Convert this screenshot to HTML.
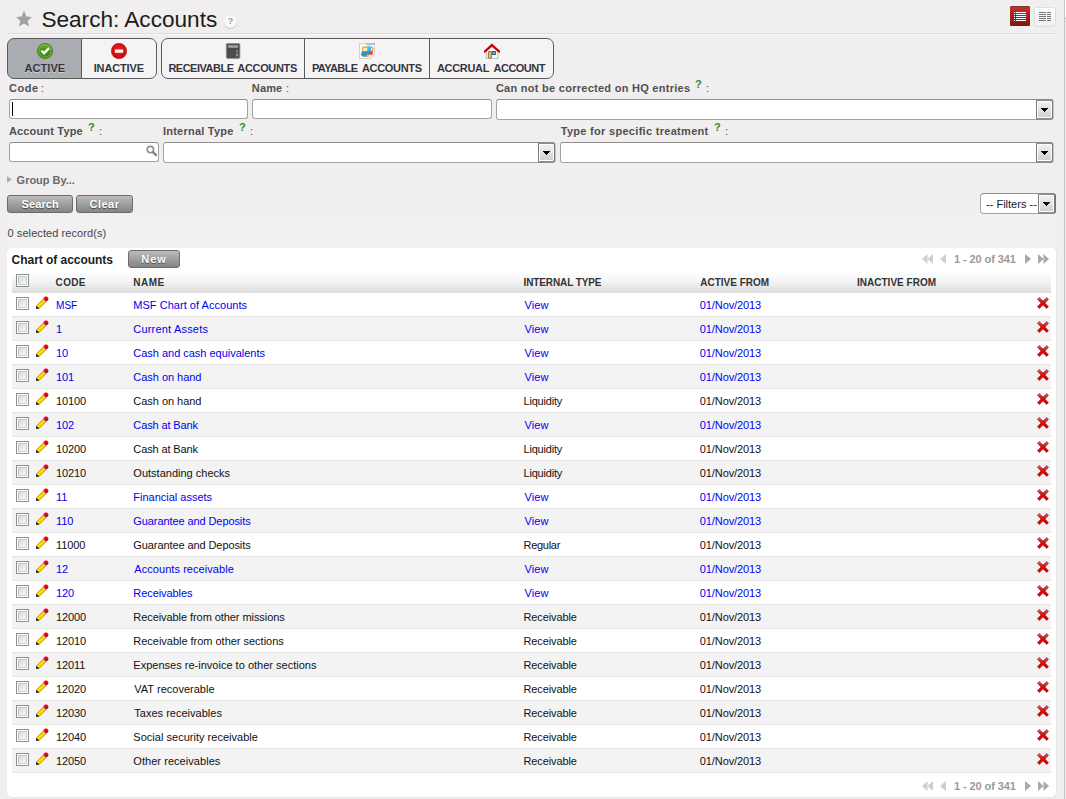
<!DOCTYPE html>
<html><head><meta charset="utf-8"><title>Search: Accounts</title>
<style>
html,body{margin:0;padding:0}
body{width:1066px;height:799px;overflow:hidden;position:relative;background:#f0eeee;font-family:"Liberation Sans",sans-serif;font-size:11px;color:#1a1a1a}
div,span,i,svg{position:absolute;box-sizing:border-box}
i{display:block}
span{white-space:nowrap;line-height:14px}
/* right edge */
#edge{left:1064px;top:0;width:1px;height:799px;background:#c6c6c6}
#edge2{left:1065px;top:0;width:1px;height:799px;background:#eeecec}
#edge3{left:1065px;top:0;width:1px;height:17px;background:#fff}
#edge4{left:1065px;top:18px;width:1px;height:1px;background:#c8c8c8}
/* title */
#star{left:16px;top:11px;width:16px;height:16px}
#title{left:42px;top:7px;font-size:22.6px;line-height:26px;color:#1b1b1b}
#help{left:224px;top:15px;width:13px;height:13px;border-radius:7px;background:#f9f9f9;box-shadow:0 1px 1px rgba(0,0,0,.18)}
#help span{left:0;top:0;width:13px;text-align:center;font-size:9px;line-height:13px;font-weight:bold;color:#9a9a9a}
#hr1{left:7px;top:33px;width:1049px;height:1px;background:#dedcdc}
#hr2{left:7px;top:34px;width:1049px;height:1px;background:#f8f7f7}
#vlist{left:1010px;top:6px;width:20px;height:20px;border-radius:1.5px;background:linear-gradient(#c6342b,#a8241c 45%,#7b1710);box-shadow:inset 0 1px 0 rgba(60,60,60,.55)}
#vgrid{left:1034px;top:7px;width:22px;height:20px;border-radius:3px;background:linear-gradient(#ffffff,#efefef);border:1px solid #e0dede}
#vlist svg,#vgrid svg{left:0;top:0}
/* toolbar buttons */
.grp{top:38px;height:41px;border:1px solid #5a5a5a;border-radius:7px;background:#f5f3f3;overflow:hidden}
.grp .btn{top:0;height:39px}
.grp .sep{top:0;width:1px;height:39px;background:#5a5a5a}
.grp .on{background:#a9acb1}
.btn svg{top:4px;width:16px;height:16px}
.btn span{top:22px;left:0;width:100%;text-align:center;font-weight:bold;font-size:11px;line-height:14px;color:#35353d;text-shadow:0 1px 0 rgba(255,255,255,.45)}
.btn span.w{width:auto;text-align:left}
/* labels */
.lb{font-weight:bold;color:#505050;font-size:11px}
.co{color:#4d4d4d;font-size:11px}
.q{color:#2e8b2e;font-size:11px;font-weight:bold}
.inp{height:20px;background:#fff;border:1px solid #a3a3a3;border-top-color:#8e8e8e;border-radius:3px}
.sel{height:21px;background:#fff;border:1px solid #a3a3a3;border-top-color:#8e8e8e;border-radius:3px}
.sel i{right:-1px;top:-1px;width:17px;height:21px;border:1px solid #787878;border-top:2px solid #8c8c8c;border-bottom:2px solid #8c8c8c;border-radius:0 3px 3px 0;background:linear-gradient(#f3f3f3,#e4e4e4 45%,#cecece);box-shadow:inset 0 0 0 1px #fff,1px 0 0 rgba(120,120,120,.35)}
.sel i:after{content:"";position:absolute;left:4px;top:7px;width:7px;height:4px;background:linear-gradient(#000,#000) 0 0/7px 1px no-repeat,linear-gradient(#000,#000) 1px 1px/5px 1px no-repeat,linear-gradient(#000,#000) 2px 2px/3px 1px no-repeat,linear-gradient(#000,#000) 3px 3px/1px 1px no-repeat}
/* grey buttons */
.gb{height:18px;border:1px solid #6b6b6b;border-radius:3px;background:linear-gradient(#bdbdbd,#a2a2a2 45%,#858585)}
.gb span{left:0;top:1px;width:100%;text-align:center;color:#fff;font-weight:bold;font-size:11px;line-height:14px;text-shadow:0 1px 1px rgba(0,0,0,.55)}
/* panel */
#panel{left:7px;top:248px;width:1049px;height:549px;background:#fff;border-radius:5px;box-shadow:1px 1px 0 #e6e4e4}
#thead{left:12px;top:271px;width:1039px;height:22px;background:linear-gradient(#ffffff,#f6f6f6 40%,#dddddd)}
#thead span{top:6px;font-weight:bold;font-size:10px;line-height:12px;color:#333}
.cb{width:13px;height:13px;border:1px solid #8e8f8f;background:#fff}
.cb:after{content:"";position:absolute;left:1px;top:1px;width:9px;height:9px;background:linear-gradient(135deg,#d3d7db,#eceeef 60%,#f6f6f6);box-shadow:inset 0 0 0 1px rgba(170,175,180,.5)}
.r{left:12px;width:1039px;height:24px;border-bottom:1px solid #e4e4e4;background:#fff}
.r.alt{background:#f3f3f3}
.r .cb{left:4px;top:4px}
.r .pen{left:24px;top:4px;width:12px;height:12px;overflow:visible}
.r .del{left:1025px;top:4px;width:12px;height:12px}
.r span{top:5px;font-size:11px;line-height:14px;color:#111}
.r.b span{color:#0000f0}
.c1{left:44px}.c2{left:122px}.c3{left:512px}.c4{left:688px}
.pg{font-weight:bold;color:#9a9a9a;font-size:11px}
</style></head>
<body>
<svg width="0" height="0" style="left:0;top:0">
<defs>
<linearGradient id="gx" x1="0" y1="0" x2="0" y2="1"><stop offset="0" stop-color="#e26a6a"/><stop offset=".45" stop-color="#d40d0d"/><stop offset="1" stop-color="#e80000"/></linearGradient>
<g id="del"><path d="M2.2 0.6 L6 4.1 L9.8 0.6 L11.5 2.3 L7.9 6 L11.5 9.7 L9.8 11.4 L6 7.9 L2.2 11.4 L0.5 9.7 L4.1 6 L0.5 2.3 Z" fill="url(#gx)" stroke="#a31010" stroke-width=".7" stroke-linejoin="round"/></g>
<g id="pen">
<path d="M0 12.1 L0.4 8.4 L3.6 11.6 Z" fill="#141414"/>
<path d="M0.4 8.4 L7.3 1.6 L10.4 4.7 L3.6 11.6 Z" fill="#ffdb00"/>
<path d="M0.4 8.4 L7.3 1.6 L8.0 2.3 L1.1 9.1 Z" fill="#f0a000"/>
<path d="M2.9 10.9 L9.7 4.0 L10.4 4.7 L3.6 11.6 Z" fill="#e6a200"/>
<path d="M6.8 2.1 L7.8 1.1 L10.9 4.2 L9.9 5.2 Z" fill="#4aa8ee"/>
<path d="M8.5 -0.3 L10.8 -0.4 L12.3 1.1 L12.3 3.1 L11.0 4.2 L9.2 3.7 L7.7 1.4 Z" fill="#e00010"/>
</g>
<g id="pfirst"><path d="M5.5 0 L5.5 9 L0 4.5 Z M11 0 L11 9 L5.5 4.5 Z"/></g>
<g id="pprev"><path d="M6 0 L6 9 L0 4.5 Z"/></g>
</defs>
</svg>
<i id="edge"></i><i id="edge2"></i><i id="edge3"></i><i id="edge4"></i>

<svg id="star" viewBox="0 0 16 16" style="overflow:visible"><path d="M8 -0.5 L10.3 5.4 L16 5.9 L11.7 9.8 L13 15.6 L8 12.5 L3 15.6 L4.3 9.8 L0 5.9 L5.7 5.4 Z" fill="#a3a1a1"/></svg>
<span id="title" style="margin-left:-0.6px">Search: Accounts</span>
<div id="help"><span>?</span></div>
<i id="hr1"></i><i id="hr2"></i>
<div id="vlist"><svg width="20" height="20" viewBox="0 0 20 20"><path d="M4 6h1v1H4zM4 8h1v1H4zM4 10h1v1H4zM4 12h1v1H4zM4 14h1v1H4zM6 6h10v1H6zM6 8h10v1H6zM6 10h10v1H6zM6 12h10v1H6zM6 14h10v1H6z" fill="#fff"/></svg></div>
<div id="vgrid"><svg width="20" height="18" viewBox="0 0 20 18" style="left:0;top:0"><path d="M4 4h7v1H4zM4 6h7v1H4zM4 8h7v1H4zM4 10h7v1H4zM4 12h7v1H4zM12 4h4v1h-4zM12 6h4v1h-4zM12 8h4v1h-4zM12 10h4v1h-4zM12 12h4v1h-4z" fill="#787474"/></svg></div>

<!-- toolbar group 1 -->
<div class="grp" style="left:7px;width:150px;background:linear-gradient(90deg,#a9acb1 73px,#f5f3f3 73px)">
  <div class="btn" style="left:0;width:73px">
    <svg viewBox="0 0 16 16" style="left:29px">
      <defs><linearGradient id="gg" x1="0" y1="0" x2="0" y2="1"><stop offset="0" stop-color="#74ae38"/><stop offset=".5" stop-color="#4a9018"/><stop offset="1" stop-color="#3f8612"/></linearGradient></defs>
      <circle cx="8" cy="8" r="7.5" fill="url(#gg)" stroke="#3c7a14" stroke-width=".9"/>
      <circle cx="8" cy="8" r="6.3" fill="none" stroke="#9cc96c" stroke-width=".8" opacity=".75"/>
      <path d="M3.6 8.3 L5.3 6.9 L7 8.6 L11.3 4.3 L12.9 5.9 L7 11.9 Z" fill="#fff"/>
    </svg>
    <span style="letter-spacing:0.06px;margin-left:0.4px">ACTIVE</span>
  </div>
  <i class="sep" style="left:73px"></i>
  <div class="btn" style="left:74px;width:74px">
    <svg viewBox="0 0 16 16" style="left:29px">
      <defs><radialGradient id="gr" cx=".5" cy=".4" r=".6"><stop offset="0" stop-color="#ec2020"/><stop offset=".75" stop-color="#d40c10"/><stop offset="1" stop-color="#b80408"/></radialGradient></defs>
      <circle cx="8" cy="8" r="7.7" fill="url(#gr)" stroke="#b00408" stroke-width=".5"/>
      <rect x="3.8" y="6.5" width="8.4" height="3.2" rx=".5" fill="#fff"/>
    </svg>
    <span style="letter-spacing:-0.14px;margin-left:-0.2px">INACTIVE</span>
  </div>
</div>
<!-- toolbar group 2 -->
<div class="grp" style="left:161px;width:393px">
  <div class="btn" style="left:0;width:142px">
    <svg viewBox="0 0 16 16" style="left:63px">
      <rect x="1.3" y="0.5" width="13.6" height="14.9" rx="1.3" fill="#505354" stroke="#85888a" stroke-width=".7"/>
      <rect x="3.1" y="2.2" width="10" height="2.5" rx=".6" fill="#a2a68c"/>
      <rect x="2.6" y="5.6" width="11" height="1" fill="#3c4042"/>
      <path d="M3 7.4h2v1.5H3zM6 7.4h2v1.5H6zM3 10h2v1.5H3zM6 10h2v1.5H6zM3 12.6h2v1.5H3zM6 12.6h2v1.5H6zM8.8 7.4h1.2v6.7H8.8z" fill="#424647"/>
      <path d="M11 7.2h2v1.6h-2zM11 10.4h2v2.7h-2z" fill="#8b8e8e"/>
    </svg>
    <span class="w" style="left:6.4px;letter-spacing:-0.5px">RECEIVABLE</span><span class="w" style="left:75.3px;letter-spacing:-0.33px">ACCOUNTS</span>
  </div>
  <i class="sep" style="left:142px"></i>
  <div class="btn" style="left:143px;width:124px">
    <svg viewBox="0 0 16 16" style="left:54px">
      <defs><linearGradient id="gb" x1="0" y1="0" x2="0" y2="1"><stop offset="0" stop-color="#6cd0fc"/><stop offset="1" stop-color="#1e8fe6"/></linearGradient></defs>
      <path d="M0.4 0.4H15.6V11.6L11.2 15.6H0.4Z" fill="#fafafa" stroke="#c2c2c2" stroke-width=".8"/>
      <rect x="7" y="0.4" width="8.6" height="1.3" fill="#a4aaa4"/>
      <path d="M15.6 11.6L11.2 15.6L11.4 12.2Z" fill="#e6f0f2" stroke="#c8c8c8" stroke-width=".5"/>
      <rect x="3.7" y="4.1" width="10" height="5" rx="1.2" fill="#fdf3c4" stroke="#e79c30" stroke-width="1.2"/>
      <rect x="8.2" y="2.4" width="3.9" height="8.6" rx="1.9" fill="url(#gb)"/>
      <ellipse cx="6.1" cy="10.9" rx="4.1" ry="2.9" fill="#1a98ee"/>
      <circle cx="11.9" cy="9.9" r="2" fill="#f0402e"/>
      <circle cx="5.3" cy="11.7" r="1" fill="#35b035"/>
      <circle cx="6.9" cy="11.6" r="1" fill="#e84c1e"/>
      <ellipse cx="8.7" cy="12.8" rx="1.5" ry="1.2" fill="#efb200"/>
    </svg>
    <span class="w" style="left:6.9px;letter-spacing:-0.58px">PAYABLE</span><span class="w" style="left:57px;letter-spacing:-0.33px">ACCOUNTS</span>
  </div>
  <i class="sep" style="left:267px"></i>
  <div class="btn" style="left:268px;width:123px">
    <svg viewBox="0 0 16 16" style="left:54px">
      <path d="M2.4 8.2L8 3.6L13.8 8.2V15.6H2.4Z" fill="#fdfdfb" stroke="#a3aaa3" stroke-width=".8"/>
      <path d="M0.8 8.5L7.9 2.1L15.2 8.5" fill="none" stroke="#cc0000" stroke-width="2.3" stroke-linecap="square"/>
      <rect x="4.4" y="8.4" width="3.2" height="6.6" rx=".6" fill="#e2bb76" stroke="#8c6628" stroke-width=".9"/>
      <rect x="8.1" y="8.1" width="3.8" height="3.8" rx=".4" fill="#2c4e8e"/>
      <rect x="9.1" y="9.1" width="1.9" height="1.9" fill="#8fb4e4"/>
    </svg>
    <span class="w" style="left:7px;letter-spacing:-0.32px">ACCRUAL</span><span class="w" style="left:63.6px;letter-spacing:-0.53px">ACCOUNT</span>
  </div>
</div>

<!-- form row 1 -->
<span class="lb" style="letter-spacing:0.53px;margin-left:-0.1px;left:9px;top:81px">Code</span><span class="co" style="left:41px;top:81px">:</span>
<span class="lb" style="letter-spacing:0.13px;margin-left:-0.2px;left:252px;top:81px">Name</span><span class="co" style="left:286px;top:81px">:</span>
<span class="lb" style="letter-spacing:0.27px;margin-left:-0.1px;left:496px;top:81px">Can not be corrected on HQ entries</span><span class="q" style="left:695px;top:77px">?</span><span class="co" style="left:706px;top:81px">:</span>
<div class="inp" style="left:9px;top:99px;width:239px"><i style="left:2px;top:2px;width:1px;height:14px;background:#000"></i></div>
<div class="inp" style="left:252px;top:99px;width:240px"></div>
<div class="sel" style="left:496px;top:99px;width:557px"><i></i></div>
<!-- form row 2 -->
<span class="lb" style="letter-spacing:0.17px;margin-left:-0.1px;left:9px;top:124px">Account Type</span><span class="q" style="left:88px;top:120px">?</span><span class="co" style="left:99px;top:124px">:</span>
<span class="lb" style="letter-spacing:0.24px;margin-left:-0.1px;left:163px;top:124px">Internal Type</span><span class="q" style="left:239px;top:120px">?</span><span class="co" style="left:250px;top:124px">:</span>
<span class="lb" style="letter-spacing:0.30px;margin-left:0.7px;left:560px;top:124px">Type for specific treatment</span><span class="q" style="left:714px;top:120px">?</span><span class="co" style="left:725px;top:124px">:</span>
<div class="inp" style="left:9px;top:142px;width:150px">
  <svg viewBox="0 0 12 12" style="left:136px;top:2px;width:12px;height:12px"><circle cx="4.4" cy="4.6" r="3.2" fill="#fff" stroke="#909090" stroke-width="1.6"/><path d="M7 7.2 L10 10.2" stroke="#858585" stroke-width="2.4" stroke-linecap="round"/></svg>
</div>
<div class="sel" style="left:163px;top:142px;width:392px"><i></i></div>
<div class="sel" style="left:560px;top:142px;width:493px"><i></i></div>

<!-- group by -->
<svg viewBox="0 0 5 7" style="left:7px;top:176px;width:5px;height:7px"><path d="M0 0 L5 3.5 L0 7 Z" fill="#b0aeae"/></svg>
<span class="lb" style="letter-spacing:-0.02px;margin-left:-0.4px;left:17px;top:173px;color:#6a6a6a">Group By...</span>

<div class="gb" style="left:7px;top:195px;width:66px"><span style="letter-spacing:0.10px;margin-left:0.2px">Search</span></div>
<div class="gb" style="left:76px;top:195px;width:57px"><span style="letter-spacing:0.50px">Clear</span></div>
<div class="sel" style="left:980px;top:193px;width:76px;border-radius:4px"><span style="letter-spacing:0.01px;left:5px;top:3px;font-size:11px;color:#15152a">-- Filters --</span><i style="border-right-width:2px;width:18px;box-shadow:inset 0 0 0 1px #fff"></i></div>
<i style="left:7px;top:214px;width:1049px;height:34px;background:#f2f0f0"></i>

<span style="letter-spacing:0.08px;margin-left:0.5px;left:7px;top:226px;color:#444">0 selected record(s)</span>

<div id="panel"></div>
<span style="letter-spacing:-0.04px;margin-left:-0.4px;left:12px;top:253px;font-size:12px;font-weight:bold;color:#1c1c1c;line-height:15px">Chart of accounts</span>
<div class="gb" style="left:128px;top:250px;width:52px"><span style="letter-spacing:0.95px;margin-left:0.1px">New</span></div>

<!-- pager top -->
<svg viewBox="0 0 11 9" preserveAspectRatio="none" style="left:922px;top:254px;width:11px;height:10px" fill="#cfcfcf"><use href="#pfirst"/></svg>
<svg viewBox="0 0 6 9" preserveAspectRatio="none" style="left:940px;top:254px;width:6px;height:10px" fill="#cfcfcf"><use href="#pprev"/></svg>
<span class="pg" style="letter-spacing:-0.08px;margin-left:-0.1px;left:954px;top:252px">1 - 20 of 341</span>
<svg viewBox="0 0 6 9" preserveAspectRatio="none" style="left:1025px;top:254px;width:6px;height:10px;transform:scaleX(-1)" fill="#a9a9a9"><use href="#pprev"/></svg>
<svg viewBox="0 0 11 9" preserveAspectRatio="none" style="left:1038px;top:254px;width:11px;height:10px;transform:scaleX(-1)" fill="#a9a9a9"><use href="#pfirst"/></svg>

<div id="thead">
  <i class="cb" style="left:4px;top:3px"></i>
  <span style="letter-spacing:0.33px;margin-left:-0.4px;left:44px">CODE</span>
  <span style="letter-spacing:0.47px;margin-left:-0.7px;left:122px">NAME</span>
  <span style="letter-spacing:-0.11px;margin-left:-0.5px;left:512px">INTERNAL TYPE</span>
  <span style="letter-spacing:-0.01px;margin-left:0.3px;left:688px">ACTIVE FROM</span>
  <span style="letter-spacing:0.03px;margin-left:-0.1px;left:845px">INACTIVE FROM</span>
</div>
<div id="rows">
<div class="r b" style="top:293px"><i class="cb"></i><svg class="pen" viewBox="0 0 12 12"><use href="#pen"/></svg><span class="c1" style="transform:scaleX(0.915);transform-origin:0 0;margin-left:-0.2px">MSF</span><span class="c2" style="letter-spacing:0.03px;margin-left:-0.7px">MSF Chart of Accounts</span><span class="c3" style="letter-spacing:0.07px;margin-left:0.5px">View</span><span class="c4" style="letter-spacing:-0.10px;margin-left:-0.2px">01/Nov/2013</span><svg class="del" viewBox="0 0 12 12"><use href="#del"/></svg></div>
<div class="r alt b" style="top:317px"><i class="cb"></i><svg class="pen" viewBox="0 0 12 12"><use href="#pen"/></svg><span class="c1">1</span><span class="c2" style="letter-spacing:0.19px;margin-left:-0.7px">Current Assets</span><span class="c3" style="letter-spacing:0.07px;margin-left:0.5px">View</span><span class="c4" style="letter-spacing:-0.10px;margin-left:-0.2px">01/Nov/2013</span><svg class="del" viewBox="0 0 12 12"><use href="#del"/></svg></div>
<div class="r b" style="top:341px"><i class="cb"></i><svg class="pen" viewBox="0 0 12 12"><use href="#pen"/></svg><span class="c1" style="letter-spacing:-0.10px">10</span><span class="c2" style="letter-spacing:-0.02px;margin-left:-0.7px">Cash and cash equivalents</span><span class="c3" style="letter-spacing:0.07px;margin-left:0.5px">View</span><span class="c4" style="letter-spacing:-0.10px;margin-left:-0.2px">01/Nov/2013</span><svg class="del" viewBox="0 0 12 12"><use href="#del"/></svg></div>
<div class="r alt b" style="top:365px"><i class="cb"></i><svg class="pen" viewBox="0 0 12 12"><use href="#pen"/></svg><span class="c1" style="letter-spacing:-0.10px">101</span><span class="c2" style="letter-spacing:-0.03px;margin-left:-0.7px">Cash on hand</span><span class="c3" style="letter-spacing:0.07px;margin-left:0.5px">View</span><span class="c4" style="letter-spacing:-0.10px;margin-left:-0.2px">01/Nov/2013</span><svg class="del" viewBox="0 0 12 12"><use href="#del"/></svg></div>
<div class="r" style="top:389px"><i class="cb"></i><svg class="pen" viewBox="0 0 12 12"><use href="#pen"/></svg><span class="c1" style="letter-spacing:-0.10px">10100</span><span class="c2" style="letter-spacing:-0.03px;margin-left:-0.7px">Cash on hand</span><span class="c3" style="letter-spacing:-0.20px;margin-left:-0.5px">Liquidity</span><span class="c4" style="letter-spacing:-0.10px;margin-left:-0.2px">01/Nov/2013</span><svg class="del" viewBox="0 0 12 12"><use href="#del"/></svg></div>
<div class="r alt b" style="top:413px"><i class="cb"></i><svg class="pen" viewBox="0 0 12 12"><use href="#pen"/></svg><span class="c1" style="letter-spacing:-0.10px">102</span><span class="c2" style="letter-spacing:-0.12px;margin-left:-0.7px">Cash at Bank</span><span class="c3" style="letter-spacing:0.07px;margin-left:0.5px">View</span><span class="c4" style="letter-spacing:-0.10px;margin-left:-0.2px">01/Nov/2013</span><svg class="del" viewBox="0 0 12 12"><use href="#del"/></svg></div>
<div class="r" style="top:437px"><i class="cb"></i><svg class="pen" viewBox="0 0 12 12"><use href="#pen"/></svg><span class="c1" style="letter-spacing:-0.10px">10200</span><span class="c2" style="letter-spacing:-0.12px;margin-left:-0.7px">Cash at Bank</span><span class="c3" style="letter-spacing:-0.20px;margin-left:-0.5px">Liquidity</span><span class="c4" style="letter-spacing:-0.10px;margin-left:-0.2px">01/Nov/2013</span><svg class="del" viewBox="0 0 12 12"><use href="#del"/></svg></div>
<div class="r alt" style="top:461px"><i class="cb"></i><svg class="pen" viewBox="0 0 12 12"><use href="#pen"/></svg><span class="c1" style="letter-spacing:-0.10px">10210</span><span class="c2" style="letter-spacing:0.01px;margin-left:-0.7px">Outstanding checks</span><span class="c3" style="letter-spacing:-0.20px;margin-left:-0.5px">Liquidity</span><span class="c4" style="letter-spacing:-0.10px;margin-left:-0.2px">01/Nov/2013</span><svg class="del" viewBox="0 0 12 12"><use href="#del"/></svg></div>
<div class="r b" style="top:485px"><i class="cb"></i><svg class="pen" viewBox="0 0 12 12"><use href="#pen"/></svg><span class="c1" style="letter-spacing:-0.10px">11</span><span class="c2" style="letter-spacing:-0.01px;margin-left:-0.7px">Financial assets</span><span class="c3" style="letter-spacing:0.07px;margin-left:0.5px">View</span><span class="c4" style="letter-spacing:-0.10px;margin-left:-0.2px">01/Nov/2013</span><svg class="del" viewBox="0 0 12 12"><use href="#del"/></svg></div>
<div class="r alt b" style="top:509px"><i class="cb"></i><svg class="pen" viewBox="0 0 12 12"><use href="#pen"/></svg><span class="c1" style="letter-spacing:-0.10px">110</span><span class="c2" style="letter-spacing:-0.09px;margin-left:-0.7px">Guarantee and Deposits</span><span class="c3" style="letter-spacing:0.07px;margin-left:0.5px">View</span><span class="c4" style="letter-spacing:-0.10px;margin-left:-0.2px">01/Nov/2013</span><svg class="del" viewBox="0 0 12 12"><use href="#del"/></svg></div>
<div class="r" style="top:533px"><i class="cb"></i><svg class="pen" viewBox="0 0 12 12"><use href="#pen"/></svg><span class="c1" style="letter-spacing:-0.10px">11000</span><span class="c2" style="letter-spacing:-0.09px;margin-left:-0.7px">Guarantee and Deposits</span><span class="c3" style="letter-spacing:-0.28px;margin-left:-0.5px">Regular</span><span class="c4" style="letter-spacing:-0.10px;margin-left:-0.2px">01/Nov/2013</span><svg class="del" viewBox="0 0 12 12"><use href="#del"/></svg></div>
<div class="r alt b" style="top:557px"><i class="cb"></i><svg class="pen" viewBox="0 0 12 12"><use href="#pen"/></svg><span class="c1" style="letter-spacing:-0.10px">12</span><span class="c2" style="letter-spacing:0.06px;margin-left:0.3px">Accounts receivable</span><span class="c3" style="letter-spacing:0.07px;margin-left:0.5px">View</span><span class="c4" style="letter-spacing:-0.10px;margin-left:-0.2px">01/Nov/2013</span><svg class="del" viewBox="0 0 12 12"><use href="#del"/></svg></div>
<div class="r b" style="top:581px"><i class="cb"></i><svg class="pen" viewBox="0 0 12 12"><use href="#pen"/></svg><span class="c1" style="letter-spacing:-0.10px">120</span><span class="c2" style="letter-spacing:-0.08px;margin-left:-0.7px">Receivables</span><span class="c3" style="letter-spacing:0.07px;margin-left:0.5px">View</span><span class="c4" style="letter-spacing:-0.10px;margin-left:-0.2px">01/Nov/2013</span><svg class="del" viewBox="0 0 12 12"><use href="#del"/></svg></div>
<div class="r alt" style="top:605px"><i class="cb"></i><svg class="pen" viewBox="0 0 12 12"><use href="#pen"/></svg><span class="c1" style="letter-spacing:-0.10px">12000</span><span class="c2" style="letter-spacing:-0.07px;margin-left:-0.7px">Receivable from other missions</span><span class="c3" style="letter-spacing:-0.11px;margin-left:-0.5px">Receivable</span><span class="c4" style="letter-spacing:-0.10px;margin-left:-0.2px">01/Nov/2013</span><svg class="del" viewBox="0 0 12 12"><use href="#del"/></svg></div>
<div class="r" style="top:629px"><i class="cb"></i><svg class="pen" viewBox="0 0 12 12"><use href="#pen"/></svg><span class="c1" style="letter-spacing:-0.10px">12010</span><span class="c2" style="letter-spacing:-0.02px;margin-left:-0.7px">Receivable from other sections</span><span class="c3" style="letter-spacing:-0.11px;margin-left:-0.5px">Receivable</span><span class="c4" style="letter-spacing:-0.10px;margin-left:-0.2px">01/Nov/2013</span><svg class="del" viewBox="0 0 12 12"><use href="#del"/></svg></div>
<div class="r alt" style="top:653px"><i class="cb"></i><svg class="pen" viewBox="0 0 12 12"><use href="#pen"/></svg><span class="c1" style="letter-spacing:-0.10px">12011</span><span class="c2" style="letter-spacing:0.01px;margin-left:-0.7px">Expenses re-invoice to other sections</span><span class="c3" style="letter-spacing:-0.11px;margin-left:-0.5px">Receivable</span><span class="c4" style="letter-spacing:-0.10px;margin-left:-0.2px">01/Nov/2013</span><svg class="del" viewBox="0 0 12 12"><use href="#del"/></svg></div>
<div class="r" style="top:677px"><i class="cb"></i><svg class="pen" viewBox="0 0 12 12"><use href="#pen"/></svg><span class="c1" style="letter-spacing:-0.10px">12020</span><span class="c2" style="letter-spacing:0.01px;margin-left:0.3px">VAT recoverable</span><span class="c3" style="letter-spacing:-0.11px;margin-left:-0.5px">Receivable</span><span class="c4" style="letter-spacing:-0.10px;margin-left:-0.2px">01/Nov/2013</span><svg class="del" viewBox="0 0 12 12"><use href="#del"/></svg></div>
<div class="r alt" style="top:701px"><i class="cb"></i><svg class="pen" viewBox="0 0 12 12"><use href="#pen"/></svg><span class="c1" style="letter-spacing:-0.10px">12030</span><span class="c2" style="letter-spacing:0.01px;margin-left:0.3px">Taxes receivables</span><span class="c3" style="letter-spacing:-0.11px;margin-left:-0.5px">Receivable</span><span class="c4" style="letter-spacing:-0.10px;margin-left:-0.2px">01/Nov/2013</span><svg class="del" viewBox="0 0 12 12"><use href="#del"/></svg></div>
<div class="r" style="top:725px"><i class="cb"></i><svg class="pen" viewBox="0 0 12 12"><use href="#pen"/></svg><span class="c1" style="letter-spacing:-0.10px">12040</span><span class="c2" style="letter-spacing:0.02px;margin-left:-0.7px">Social security receivable</span><span class="c3" style="letter-spacing:-0.11px;margin-left:-0.5px">Receivable</span><span class="c4" style="letter-spacing:-0.10px;margin-left:-0.2px">01/Nov/2013</span><svg class="del" viewBox="0 0 12 12"><use href="#del"/></svg></div>
<div class="r alt" style="top:749px"><i class="cb"></i><svg class="pen" viewBox="0 0 12 12"><use href="#pen"/></svg><span class="c1" style="letter-spacing:-0.10px">12050</span><span class="c2" style="letter-spacing:0.05px;margin-left:-0.7px">Other receivables</span><span class="c3" style="letter-spacing:-0.11px;margin-left:-0.5px">Receivable</span><span class="c4" style="letter-spacing:-0.10px;margin-left:-0.2px">01/Nov/2013</span><svg class="del" viewBox="0 0 12 12"><use href="#del"/></svg></div>
</div>
<!-- pager bottom -->
<svg viewBox="0 0 11 9" preserveAspectRatio="none" style="left:922px;top:781px;width:11px;height:10px" fill="#cfcfcf"><use href="#pfirst"/></svg>
<svg viewBox="0 0 6 9" preserveAspectRatio="none" style="left:940px;top:781px;width:6px;height:10px" fill="#cfcfcf"><use href="#pprev"/></svg>
<span class="pg" style="letter-spacing:-0.08px;margin-left:-0.1px;left:954px;top:779px">1 - 20 of 341</span>
<svg viewBox="0 0 6 9" preserveAspectRatio="none" style="left:1025px;top:781px;width:6px;height:10px;transform:scaleX(-1)" fill="#a9a9a9"><use href="#pprev"/></svg>
<svg viewBox="0 0 11 9" preserveAspectRatio="none" style="left:1038px;top:781px;width:11px;height:10px;transform:scaleX(-1)" fill="#a9a9a9"><use href="#pfirst"/></svg>
</body></html>
